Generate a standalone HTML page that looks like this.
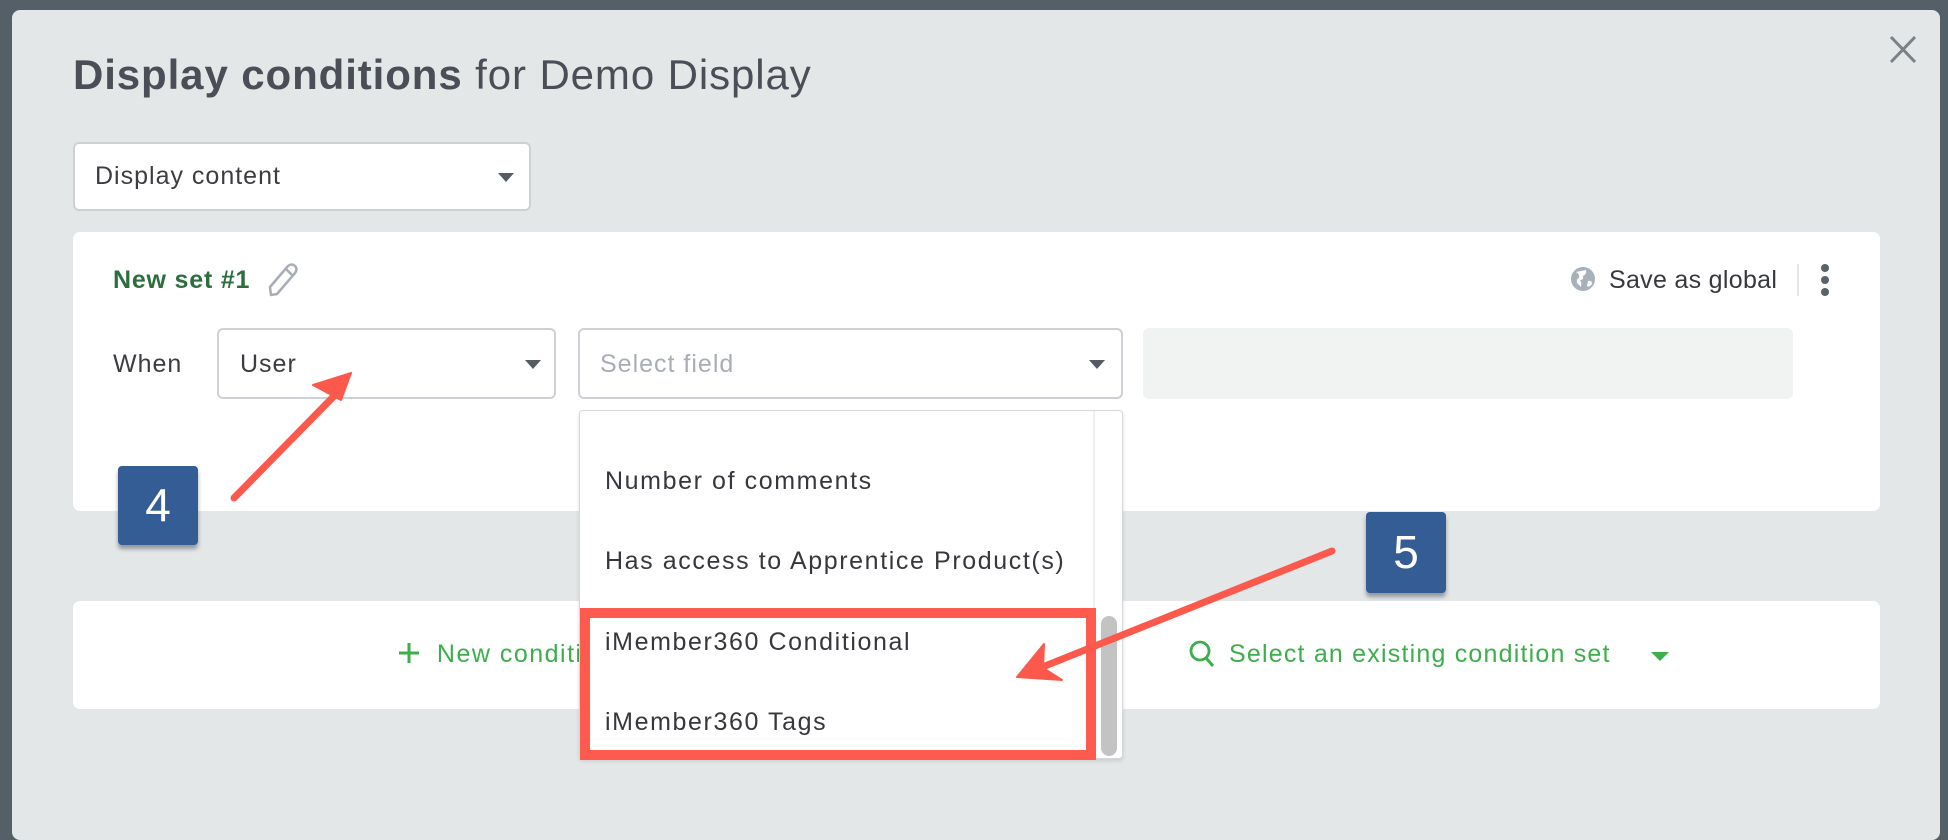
<!DOCTYPE html>
<html><head><meta charset="utf-8"><style>
*{box-sizing:border-box;margin:0;padding:0}
html,body{width:1948px;height:796px;overflow:hidden;background:#545f67;font-family:"Liberation Sans",sans-serif}
.abs{position:absolute}
.modal{left:12px;top:10px;width:1928px;height:830px;background:#e3e7e8;border-radius:8px}
.title{left:73px;top:51px;font-size:42px;color:#4b4d57;white-space:nowrap;letter-spacing:0.9px}
.sel{background:#fff;border:2px solid #cdd1d6;border-radius:6px}
.car{width:0;height:0;border-left:8px solid transparent;border-right:8px solid transparent;border-top:9px solid #555b63}
.t{font-size:25px;color:#3b3d42;white-space:nowrap;letter-spacing:1px}
.panel{background:#fff;border-radius:7px}
.item{left:605px;font-size:25px;color:#36383d;white-space:nowrap;letter-spacing:1.6px}
.badge{background:#345d95;border-radius:4px;color:#fff;font-size:46px;text-align:center;box-shadow:0 4px 4px rgba(0,0,0,.35)}
</style></head><body>
<div class="abs modal"></div>
<div class="abs title"><b>Display conditions</b> for Demo Display</div>
<svg class="abs" style="left:1888px;top:35px" width="30" height="30"><path d="M3 2L27 27M27 2L3 27" stroke="#7a8288" stroke-width="3"/></svg>

<div class="abs sel" style="left:73px;top:142px;width:458px;height:69px"></div>
<div class="abs t" style="left:95px;top:162px">Display content</div>
<div class="abs car" style="left:498px;top:173px"></div>

<div class="abs panel" style="left:73px;top:232px;width:1807px;height:279px"></div>
<div class="abs" style="left:113px;top:266px;font-size:25px;font-weight:bold;color:#2c6e3c;letter-spacing:0.8px">New set #1</div>
<svg class="abs" style="left:266px;top:262px" width="34" height="36"><path d="M5 33L4 25L22 4Q26 1 29 4Q32 7 29 11L11 32Z M20 7L27 14" fill="none" stroke="#a9aeb5" stroke-width="2.5" stroke-linejoin="round"/></svg>

<svg class="abs" style="left:1570px;top:266px" width="26" height="26"><circle cx="13" cy="13" r="12" fill="#a8b0ba"/><path d="M6 6Q10 8 9 12Q6 13 7 17L11 21Q12 16 10 14Q14 14 13 10Q17 8 16 4Z M18 15Q22 14 22 18Q19 22 17 20Z" fill="#fff"/></svg>
<div class="abs t" style="left:1609px;top:266px;color:#37393e;letter-spacing:0.3px">Save as global</div>
<div class="abs" style="left:1797px;top:264px;width:2px;height:32px;background:#e5e7ea"></div>
<div class="abs" style="left:1821px;top:264px;width:8px;height:8px;border-radius:50%;background:#5b6169"></div>
<div class="abs" style="left:1821px;top:276px;width:8px;height:8px;border-radius:50%;background:#5b6169"></div>
<div class="abs" style="left:1821px;top:288px;width:8px;height:8px;border-radius:50%;background:#5b6169"></div>

<div class="abs t" style="left:113px;top:350px">When</div>
<div class="abs sel" style="left:217px;top:328px;width:339px;height:71px"></div>
<div class="abs t" style="left:240px;top:350px">User</div>
<div class="abs car" style="left:525px;top:360px"></div>
<div class="abs sel" style="left:578px;top:328px;width:545px;height:71px"></div>
<div class="abs t" style="left:600px;top:350px;color:#a9adb4">Select field</div>
<div class="abs car" style="left:1089px;top:360px"></div>
<div class="abs" style="left:1143px;top:328px;width:650px;height:71px;background:#f1f2f2;border-radius:6px"></div>

<div class="abs panel" style="left:73px;top:601px;width:1807px;height:108px"></div>
<div class="abs" style="left:398px;top:640px;font-size:25px;color:#3cae4a;white-space:nowrap;letter-spacing:1.5px">
<svg width="22" height="22" style="vertical-align:-2px"><path d="M11 1V21M1 11H21" stroke="#3cae4a" stroke-width="3"/></svg>&nbsp;&nbsp;New condition</div>
<svg class="abs" style="left:1188px;top:638px" width="30" height="32"><circle cx="12" cy="13" r="9" fill="none" stroke="#3cae4a" stroke-width="2.8"/><path d="M18 20L25 28" stroke="#3cae4a" stroke-width="3"/></svg>
<div class="abs" style="left:1229px;top:640px;font-size:25px;color:#3cae4a;white-space:nowrap;letter-spacing:1.2px">Select an existing condition set</div>
<div class="abs" style="left:1651px;top:652px;width:0;height:0;border-left:9px solid transparent;border-right:9px solid transparent;border-top:9px solid #3cae4a"></div>

<div class="abs" style="left:579px;top:410px;width:544px;height:349px;background:#fff;border:1px solid #d6d9dc;border-radius:4px;box-shadow:0 2px 4px rgba(0,0,0,.12)"></div>
<div class="abs" style="left:1093px;top:411px;width:2px;height:347px;background:#eeeeee"></div>
<div class="abs" style="left:1101px;top:616px;width:16px;height:140px;background:#c3c3c3;border-radius:8px"></div>
<div class="abs item" style="top:467px">Number of comments</div>
<div class="abs item" style="top:547px">Has access to Apprentice Product(s)</div>
<div class="abs item" style="top:628px">iMember360 Conditional</div>
<div class="abs item" style="top:708px">iMember360 Tags</div>
<div class="abs" style="left:580px;top:608px;width:516px;height:152px;border:10px solid #ff5a4e"></div>

<div class="abs badge" style="left:118px;top:466px;width:80px;height:79px;line-height:79px">4</div>
<div class="abs badge" style="left:1366px;top:512px;width:80px;height:81px;line-height:81px">5</div>

<svg class="abs" style="left:0;top:0" width="1948" height="796">
<path d="M234 498L338 392" stroke="#fd584c" stroke-width="7" stroke-linecap="round"/>
<path d="M351 373L313 385L341 400Z" fill="#fd584c" stroke="#fd584c" stroke-width="2" stroke-linejoin="round"/>
<path d="M1332 551L1040 668" stroke="#fd584c" stroke-width="7" stroke-linecap="round"/>
<path d="M1017 677L1044 644L1043 668L1062 680Z" fill="#fd584c" stroke="#fd584c" stroke-width="2" stroke-linejoin="round"/>
</svg>
</body></html>
